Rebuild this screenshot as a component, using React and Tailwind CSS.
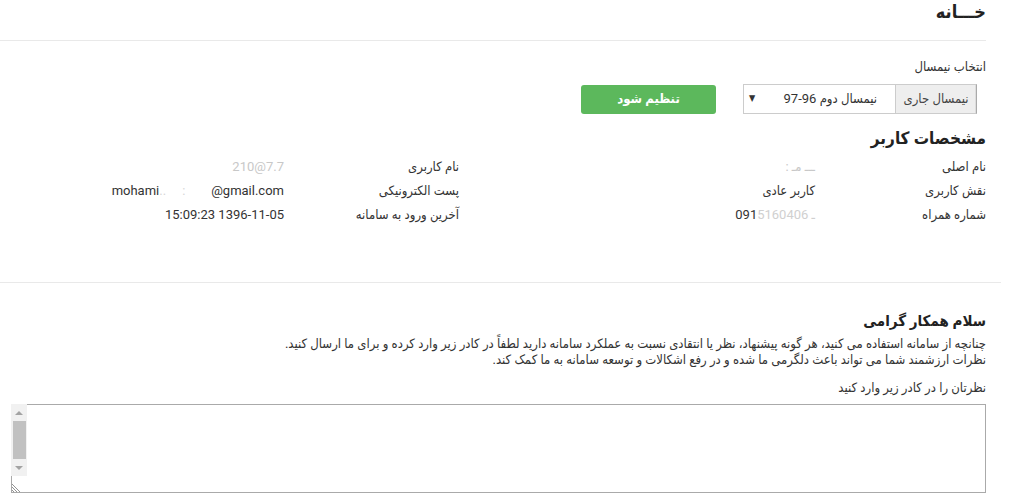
import React from 'react';

const rows = [
  ['نام اصلی', 'name', 'نام کاربری', 'user'],
  ['نقش کاربری', 'کاربر عادی', 'پست الکترونیکی', 'email'],
  ['شماره همراه', 'phone', 'آخرین ورود به سامانه', '1396-11-05 15:09:23'],
];

const Val = ({ v }) => {
  if (v === 'name') return <span className="text-[#c8c8c8] tracking-[3px]">ـــ  مـ :</span>;
  if (v === 'user') return <span className="text-[#c8c8c8]" dir="ltr">210@7.7</span>;
  if (v === 'phone')
    return (
      <span dir="ltr">
        091<span className="text-[#d0d0d0]">5160406 ـ</span>
      </span>
    );
  if (v === 'email')
    return (
      <span dir="ltr">
        mohami<span className="text-[#d6d6d6]">..&nbsp;&nbsp;&nbsp;&nbsp;&nbsp;:&nbsp;&nbsp;&nbsp;&nbsp;&nbsp;&nbsp;&nbsp;&nbsp;</span>@gmail.com
      </span>
    );
  return <span>{v}</span>;
};

export default function App() {
  return (
    <div
      dir="rtl"
      className="w-[1011px] h-[500px] overflow-hidden bg-white text-[#333] text-[13px]"
      style={{ fontFamily: '"Roboto", "DejaVu Sans Condensed", "DejaVu Sans", sans-serif' }}
    >
      {/* header */}
      <div className="mr-[25px] pt-[1px] h-[41px] border-b border-[#e9e9e9]">
        <h1 className="text-[18px] font-bold leading-[22px] text-[#222]">خـــانه</h1>
      </div>

      <div className="pr-[25px] pl-[11px]">
        <div className="pt-[17px] leading-[18px]">انتخاب نیمسال</div>

        <div className="flex items-center mt-[8px] gap-[27px]">
          <div className="flex h-[30px]">
            <div className="w-[82px] mr-[9px] flex items-center justify-center bg-[#eee] border border-[#ccc] border-r-[#aaa] shadow-[inset_-1px_0_0_#ddd] text-[#444]">
              نیمسال جاری
            </div>
            <div className="w-[152px] flex items-center justify-between border border-r-0 border-[#ccc] pr-[18px] pl-[5px] text-[13px]">
              <span>نیمسال دوم 96-97</span>
              <span className="text-[9px] text-[#333]">▼</span>
            </div>
          </div>
          <button className="w-[135px] h-[29px] rounded-[3px] bg-[#5cb85c] text-white font-bold text-[13px]">
            تنظیم شود
          </button>
        </div>

        <h2 className="mt-[12px] text-[17px] font-bold leading-[24px] text-[#222]">مشخصات کاربر</h2>

        <div className="mt-[5px] grid grid-cols-[171px_356px_175px_1fr] leading-[24px]">
          {rows.map((r, i) => (
            <React.Fragment key={i}>
              <div>{r[0]}</div>
              <div><Val v={r[1]} /></div>
              <div>{r[2]}</div>
              <div><Val v={r[3]} /></div>
            </React.Fragment>
          ))}
        </div>
      </div>

      <div className="mt-[55px] mr-[10px] border-b border-[#e9e9e9]" />

      <div className="pr-[25px] pl-[11px]">
        <h2 className="mt-[26px] text-[15px] font-bold leading-[24px] text-[#222]">سلام همکار گرامی</h2>
        <p className="mt-[3px] leading-[16px]">
          چنانچه از سامانه استفاده می کنید، هر گونه پیشنهاد، نظر یا انتقادی نسبت به عملکرد سامانه دارید لطفاً در کادر زیر وارد کرده و برای ما ارسال کنید.
          <br />
          نظرات ارزشمند شما می تواند باعث دلگرمی ما شده و در رفع اشکالات و توسعه سامانه به ما کمک کند.
        </p>
        <div className="mt-[11px] leading-[18px]">نظرتان را در کادر زیر وارد کنید</div>
        <div className="relative mt-[7px] w-[975px] h-[89px]">
          <textarea
            dir="rtl"
            className="block w-full h-full border border-[#aaa] overflow-hidden resize-none outline-none"
          />
          {/* scrollbar drawn over the left edge */}
          <div className="absolute left-0 top-0 w-[16px] h-[72px] bg-[#f1f1f1] flex flex-col items-center">
            <div className="h-[17px] flex items-center justify-center">
              <div className="w-0 h-0 border-l-[4px] border-r-[4px] border-b-[4px] border-l-transparent border-r-transparent border-b-[#a3a3a3]" />
            </div>
            <div className="w-[13px] h-[38px] bg-[#c1c1c1]" />
            <div className="flex-1 flex items-center justify-center">
              <div className="w-0 h-0 border-l-[4px] border-r-[4px] border-t-[4px] border-l-transparent border-r-transparent border-t-[#a3a3a3]" />
            </div>
          </div>
          <svg className="absolute left-[1px] bottom-[1px]" width="10" height="10" viewBox="0 0 10 10">
            <path d="M0 2 L8 10 M0 5 L5 10 M0 8 L2 10" stroke="#777" strokeWidth="0.8" />
          </svg>
        </div>
      </div>
    </div>
  );
}
